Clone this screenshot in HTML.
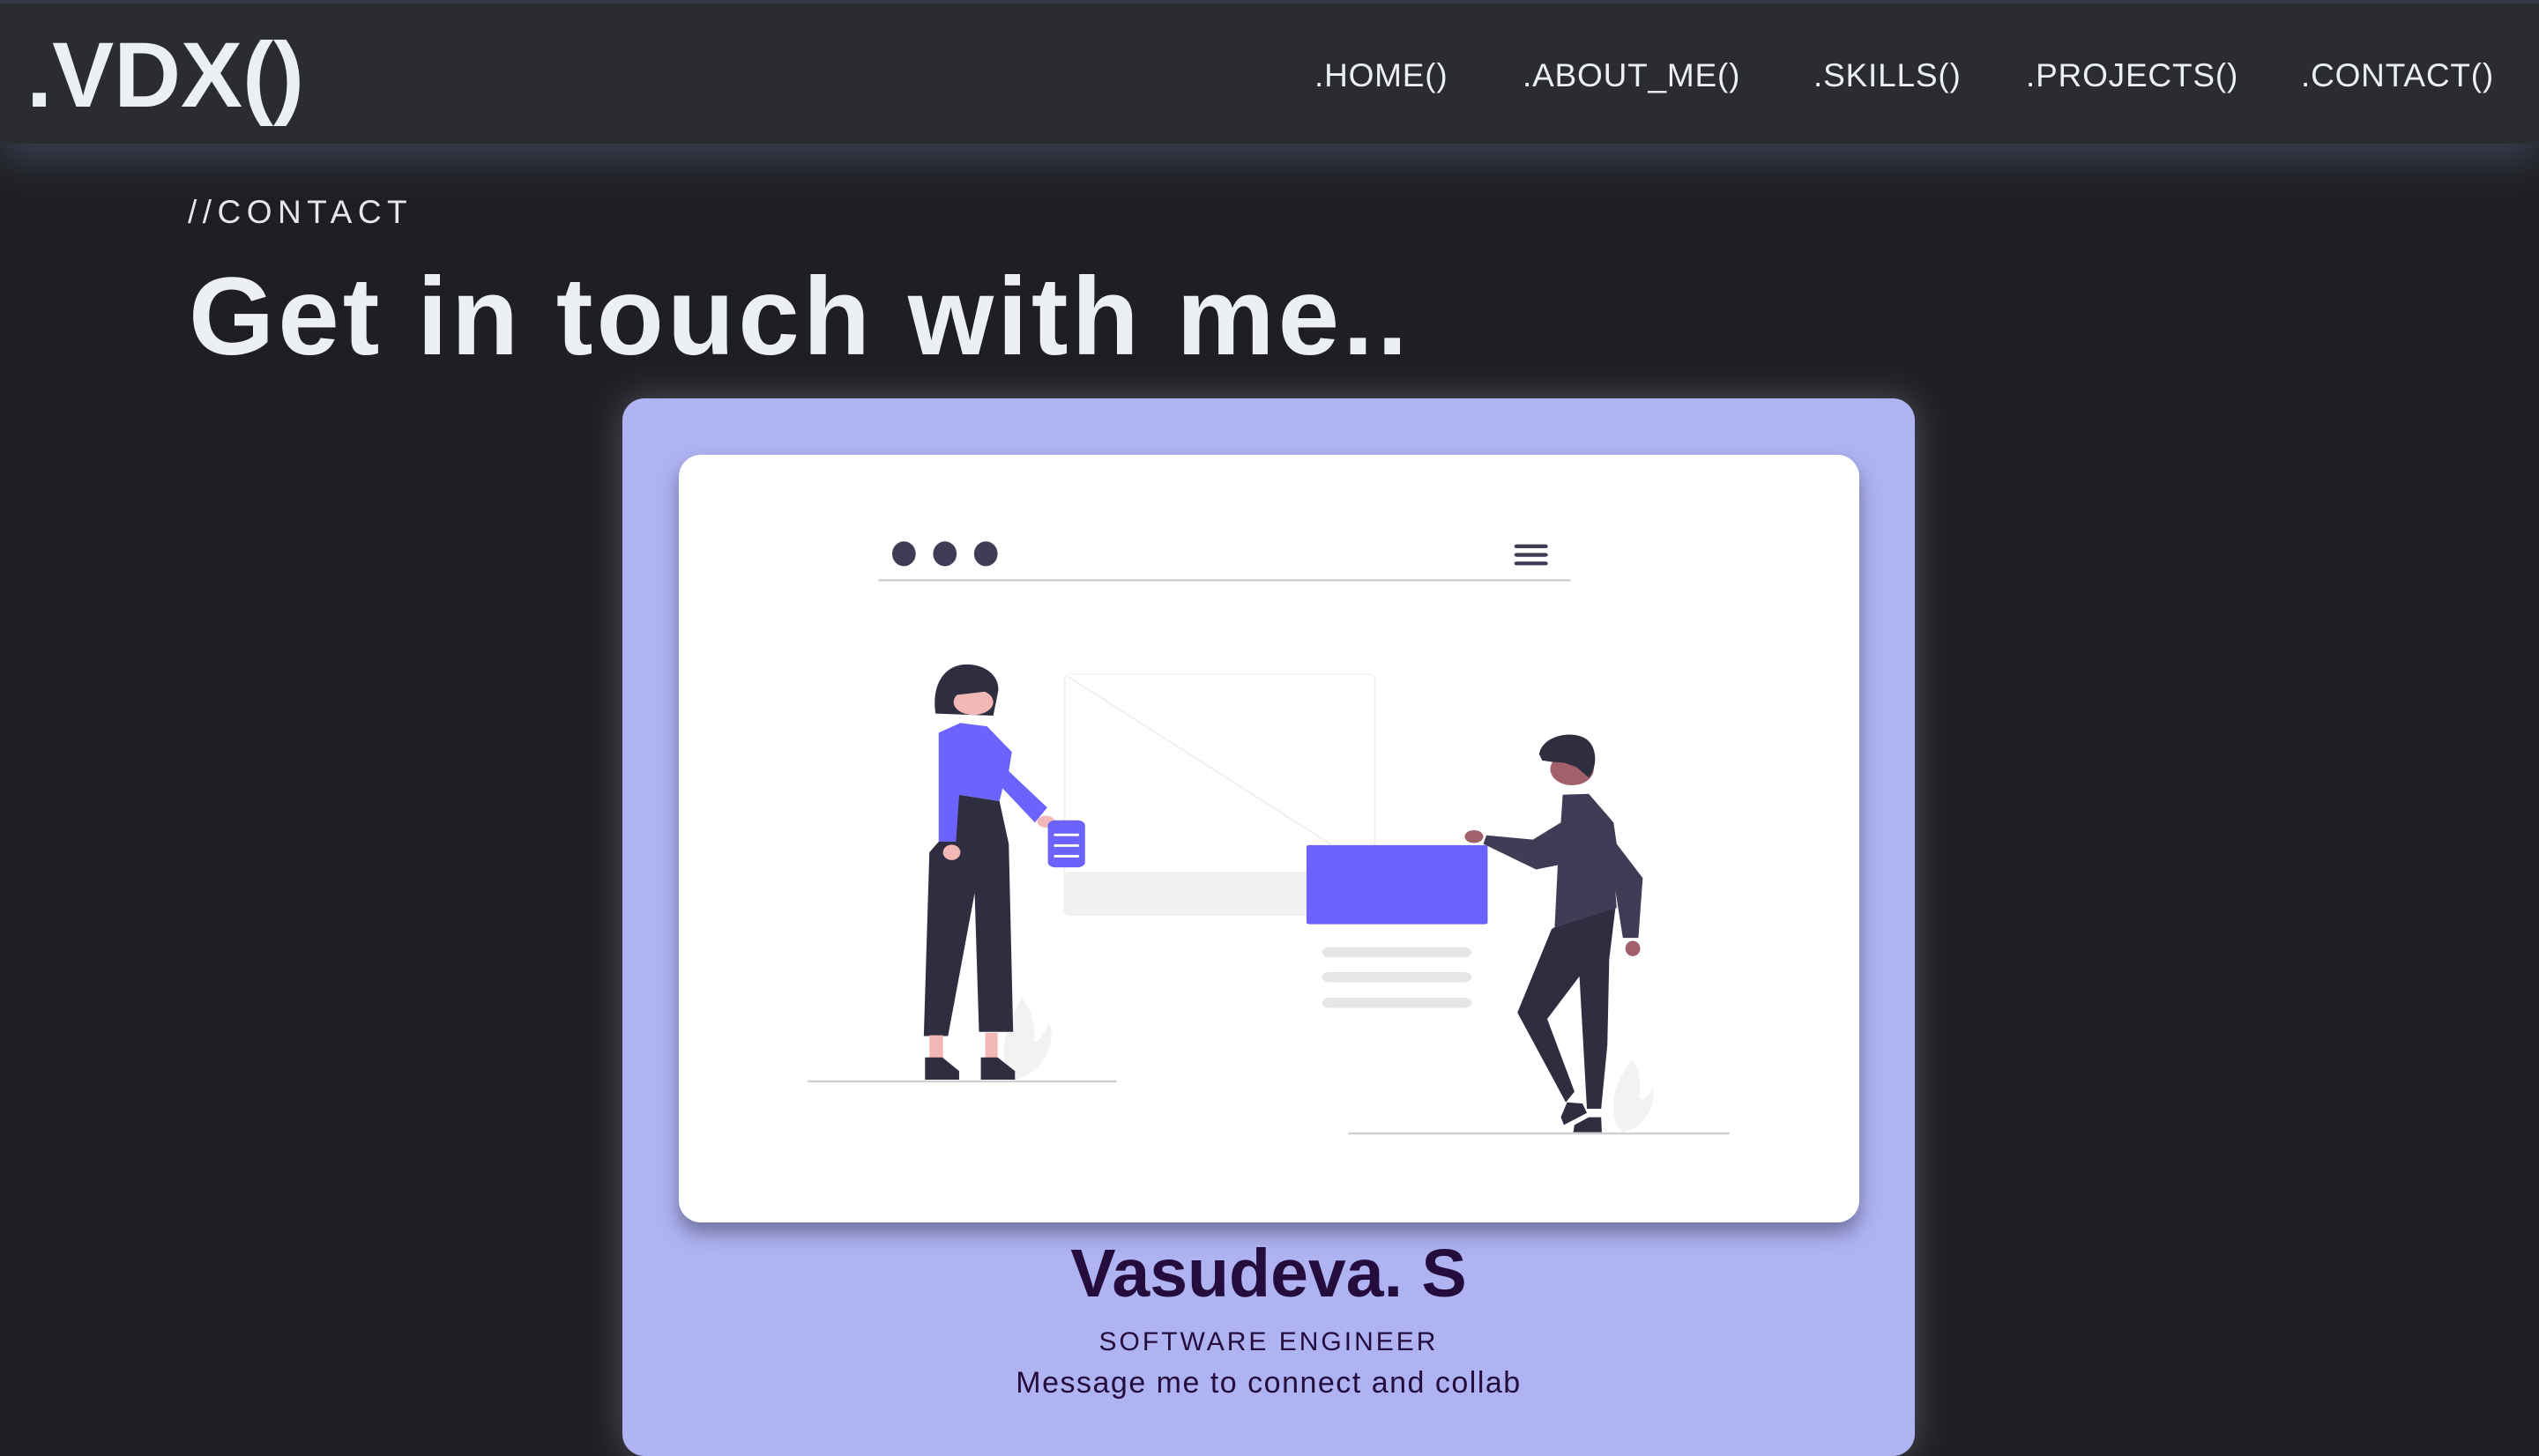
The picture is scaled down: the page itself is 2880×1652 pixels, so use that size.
<!DOCTYPE html>
<html><head><meta charset="utf-8">
<style>
html,body{margin:0;padding:0}
body{width:2880px;height:1568px;overflow:hidden;background:#1f1f23;font-family:"Liberation Sans",sans-serif;position:relative}
.nav{position:absolute;left:0;top:0;width:2880px;height:163px;background:#2b2c31;border-top:4px solid #353847;box-sizing:border-box;box-shadow:0 20px 40px rgba(60,66,85,0.9);z-index:2}
.logo{position:absolute;left:30px;top:22px;font-size:105px;font-weight:bold;color:#eceff4;letter-spacing:0px}
.nav a{position:absolute;top:61px;font-size:37px;color:#eceff4;text-decoration:none;letter-spacing:0.8px}
.sub{position:absolute;left:213px;top:220px;font-size:37px;color:#e6e8ee;letter-spacing:6.5px}
.h1{position:absolute;left:214px;top:288px;font-size:125px;font-weight:bold;color:#eceff4;letter-spacing:4px}
.card{position:absolute;left:706px;top:452px;width:1466px;height:1200px;background:#afb3f2;border-radius:25px;box-shadow:0 0 40px rgba(120,122,140,0.55)}
.inner{position:absolute;left:64px;top:64px;width:1339px;height:871px;background:#fff;border-radius:25px;box-shadow:0 12px 22px rgba(60,60,90,0.55);overflow:hidden}
.name{position:absolute;left:0;width:1466px;top:949px;text-align:center;font-size:77px;font-weight:bold;color:#240c3c}
.role{position:absolute;left:0;width:1466px;top:1054px;text-align:center;font-size:30px;color:#240c3c;letter-spacing:3px}
.msg{position:absolute;left:0;width:1466px;top:1098px;text-align:center;font-size:34px;color:#240c3c;letter-spacing:1.5px}
</style></head><body>
<div class="nav">
<div class="logo">.VDX()</div>
<a style="left:1491px">.HOME()</a>
<a style="left:1727px">.ABOUT_ME()</a>
<a style="left:2057px">.SKILLS()</a>
<a style="left:2298px">.PROJECTS()</a>
<a style="left:2610px">.CONTACT()</a>
</div>
<div class="sub">//CONTACT</div>
<div class="h1">Get in touch with me..</div>
<div class="card">
<div class="inner">
<svg style="position:absolute;left:128px;top:44px" width="1092" height="760" viewBox="0 0 1552 1568" preserveAspectRatio="none">
<ellipse cx="181" cy="141" rx="19" ry="29" fill="#3f3d56"/>
<ellipse cx="247" cy="141" rx="19" ry="29" fill="#3f3d56"/>
<ellipse cx="313" cy="141" rx="19" ry="29" fill="#3f3d56"/>
<line x1="140" y1="203" x2="1256" y2="203" stroke="#d0d0d0" stroke-width="5"/>
<rect x="1165" y="119" width="54" height="9" rx="4" fill="#3f3d56"/>
<rect x="1165" y="139" width="54" height="9" rx="4" fill="#3f3d56"/>
<rect x="1165" y="159" width="54" height="9" rx="4" fill="#3f3d56"/>
<rect x="440" y="422" width="500" height="565" rx="12" fill="none" stroke="#f2f2f2" stroke-width="3"/>
<line x1="445" y1="428" x2="870" y2="822" stroke="#eeeeee" stroke-width="3"/>
<rect x="440" y="885" width="400" height="102" rx="10" fill="#f0f0f0"/>
<rect x="830" y="823" width="292" height="185" rx="4" fill="#6c63ff"/>
<rect x="855" y="1062" width="241" height="24" rx="12" fill="#e6e6e6"/>
<rect x="855" y="1120" width="241" height="24" rx="12" fill="#e6e6e6"/>
<rect x="855" y="1180" width="241" height="24" rx="12" fill="#e6e6e6"/>
<line x1="26" y1="1376" x2="524" y2="1376" stroke="#cfcfcf" stroke-width="5"/>
<line x1="897" y1="1498" x2="1512" y2="1498" stroke="#cfcfcf" stroke-width="5"/>
<path d="M372 1180 C340 1250 330 1330 360 1372 C400 1360 430 1290 415 1240 C405 1270 395 1290 390 1280 C395 1240 385 1210 372 1180Z" fill="#f2f2f2"/>
<path d="M1355 1325 C1320 1390 1315 1460 1340 1495 C1375 1485 1395 1430 1388 1390 C1378 1420 1368 1425 1366 1410 C1370 1375 1365 1345 1355 1325Z" fill="#f2f2f2"/>
<path d="M232 515 C225 450 245 400 282 400 C315 400 335 430 333 462 L325 520 Z" fill="#2f2e41"/>
<ellipse cx="293" cy="488" rx="32" ry="30" fill="#f2b8b6"/>
<path d="M262 465 C270 440 310 438 333 460 L262 472Z" fill="#2f2e41"/>
<path d="M270 705 L335 720 L350 820 L357 1260 L302 1260 L295 935 L252 1270 L213 1270 L222 840 L237 815Z" fill="#2f2e41"/>
<rect x="222" y="1268" width="22" height="55" fill="#f2b8b6"/>
<rect x="312" y="1262" width="20" height="60" fill="#f2b8b6"/>
<path d="M215 1320 L243 1320 L270 1352 L270 1372 L215 1372Z" fill="#2f2e41"/>
<path d="M305 1320 L332 1320 L360 1352 L360 1372 L305 1372Z" fill="#2f2e41"/>
<path d="M237 560 L272 537 L315 545 L355 605 L350 650 L412 735 L392 770 L340 690 L335 720 L270 705 L265 815 L237 815Z" fill="#6c63ff"/>
<ellipse cx="258" cy="840" rx="14" ry="18" fill="#f2b8b6"/>
<ellipse cx="410" cy="768" rx="14" ry="14" fill="#f2b8b6"/>
<rect x="413" y="765" width="60" height="110" rx="12" fill="#6c63ff"/>
<rect x="423" y="796" width="40" height="6" fill="#fff"/>
<rect x="423" y="821" width="40" height="6" fill="#fff"/>
<rect x="423" y="846" width="40" height="6" fill="#fff"/>
<ellipse cx="1258" cy="645" rx="35" ry="38" fill="#a0616a"/>
<path d="M1205 610 C1210 570 1250 555 1275 570 C1300 585 1300 640 1285 665 L1265 640 L1245 630 L1225 628 L1210 625Z" fill="#2f2e41"/>
<path d="M1230 1015 L1328 970 L1318 1090 L1315 1290 L1305 1440 L1282 1440 L1270 1130 L1218 1230 L1262 1400 L1248 1425 L1170 1215 L1225 1020Z" fill="#2f2e41"/>
<path d="M1243 705 L1285 703 L1325 770 L1330 820 L1372 900 L1365 1040 L1340 1040 L1328 930 L1330 970 L1230 1015 L1235 870 L1200 880 L1115 820 L1120 800 L1195 810 L1240 770Z" fill="#3f3d56"/>
<ellipse cx="1100" cy="803" rx="15" ry="15" fill="#a0616a"/>
<ellipse cx="1356" cy="1065" rx="12" ry="18" fill="#a0616a"/>
<path d="M1250 1425 L1275 1428 L1282 1450 L1245 1478 L1240 1460Z" fill="#2f2e41"/>
<path d="M1285 1460 L1305 1460 L1306 1495 L1260 1495 L1262 1478Z" fill="#2f2e41"/>
</svg>
</div>
<div class="name">Vasudeva. S</div>
<div class="role">SOFTWARE ENGINEER</div>
<div class="msg">Message me to connect and collab</div>
</div>
</body></html>
